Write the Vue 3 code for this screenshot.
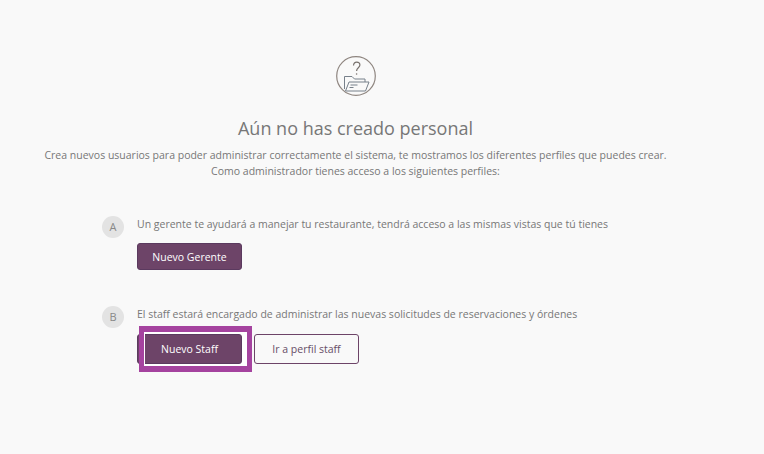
<script setup>
const title = 'Aún no has creado personal'
</script>

<template>
  <main class="page">
    <header class="head">
      <svg class="icon" width="40" height="40" viewBox="0 0 40 40" fill="none" aria-hidden="true">
        <circle cx="20" cy="20" r="19.300" stroke="#8f8680" stroke-width="1.200" />
        <path d="M8.500 33V20.500h7.500l2.500 2.500H29v3" stroke="#77808a" stroke-width="1" />
        <path d="M9.500 35l3.500-9H33l-3.500 9z" stroke="#77808a" stroke-width="1" fill="#f9f9f9" />
        <path d="M14.500 29h7M13.500 31.500h4" stroke="#77808a" stroke-width="1" />
        <path d="M17.500 9.500c.2-2.200 1.500-3.300 3.200-3.300 1.800 0 3.200 1.200 3.200 2.900 0 2.600-3.300 2.800-3.300 5.800" stroke="#77706c" stroke-width="1.200" />
        <circle cx="20.600" cy="18" r=".8" fill="#77706c" />
      </svg>
      <h1>{{ title }}</h1>
      <p class="intro">Crea nuevos usuarios para poder administrar correctamente el sistema, te mostramos los diferentes perfiles que puedes crear.<br>Como administrador tienes acceso a los siguientes perfiles:</p>
    </header>

    <section class="profile first">
      <span class="badge">A</span>
      <div class="body">
        <p>Un gerente te ayudará a manejar tu restaurante, tendrá acceso a las mismas vistas que tú tienes</p>
        <div class="actions"><button class="btn solid">Nuevo Gerente</button></div>
      </div>
    </section>

    <section class="profile second">
      <span class="badge">B</span>
      <div class="body">
        <p>El staff estará encargado de administrar las nuevas solicitudes de reservaciones y órdenes</p>
        <div class="actions">
          <button class="btn solid staff">Nuevo Staff<span class="highlight"><span class="gap"></span></span></button>
          <button class="btn outline">Ir a perfil staff</button>
        </div>
      </div>
    </section>
  </main>
</template>

<style scoped>
.page {
  width: 764px;
  height: 454px;
  box-sizing: border-box;
  padding-top: 56px;
  background: #f9f9f9;
  font-family: "Open Sans", "Liberation Sans", sans-serif;
  color: #777;
  overflow: hidden;
}
.head {
  width: 711px;
  text-align: center;
}
.icon {
  display: block;
  margin: 0 auto;
}
h1 {
  margin: 20px 0 0;
  font-size: 18px;
  line-height: 25px;
  font-weight: 400;
}
.intro {
  margin: 6px 0 0;
  font-size: 10.500px;
  line-height: 16px;
}
.profile {
  display: flex;
  margin-left: 102px;
  gap: 13px;
}
.first { margin-top: 37px; }
.second { margin-top: 36px; }
.badge {
  flex: none;
  width: 22px;
  height: 22px;
  border-radius: 50%;
  background: #e3e3e3;
  color: #888;
  font-size: 11px;
  line-height: 22px;
  text-align: center;
}
.body p {
  margin: 0;
  font-size: 10.500px;
  line-height: 16px;
}
.actions {
  display: flex;
  gap: 12px;
  margin-top: 11px;
}
.second .actions { margin-top: 12px; }
.btn {
  box-sizing: border-box;
  border-radius: 3px;
  font: 400 10.500px "Open Sans", "Liberation Sans", sans-serif;
  padding: 0;
}
.solid {
  width: 105px;
  height: 27px;
  border: 1px solid #5b3a5f;
  background: #6d4468;
  color: #fff;
}
.staff {
  position: relative;
  height: 30px;
}
.outline {
  width: 105px;
  height: 30px;
  border: 1px solid #6d4468;
  background: transparent;
  color: #664d66;
}
.highlight {
  position: absolute;
  left: 1px;
  top: -9px;
  width: 113px;
  height: 46px;
  box-sizing: border-box;
  border-style: solid;
  border-color: #a5439f;
  border-width: 6px 5px 6px 5px;
  pointer-events: none;
}
.gap {
  display: block;
  width: 100%;
  height: 100%;
  box-sizing: border-box;
  border-style: solid;
  border-color: #fff;
  border-width: 2px 5px 2px 1px;
}
</style>
